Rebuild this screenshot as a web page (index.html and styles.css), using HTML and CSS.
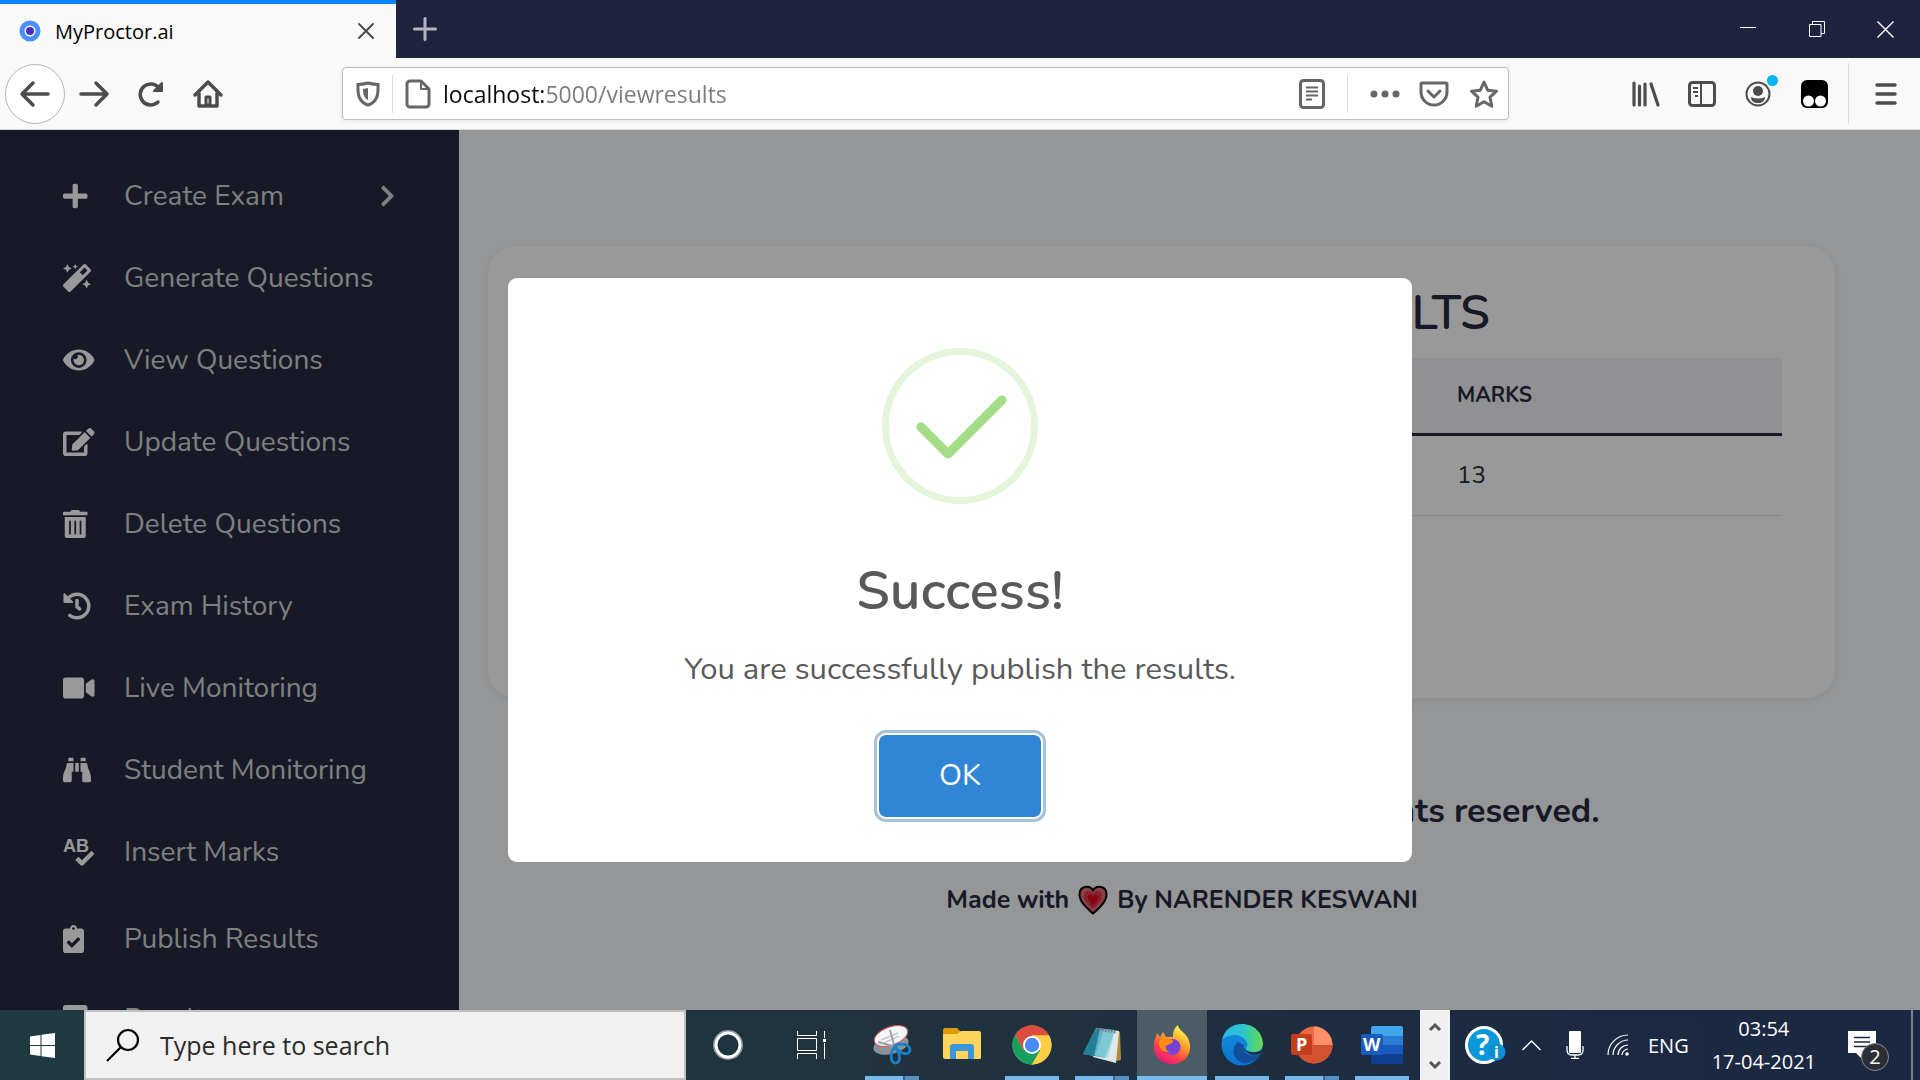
FILE: index.html
```html
<!DOCTYPE html>
<html lang="en">
<head>
<meta charset="utf-8">
<title>MyProctor.ai</title>
<link rel="stylesheet" href="styles.css">
</head>
<body>
<header class="browser">
  <div class="tabs">
    <div class="tab">
      <svg class="favicon" viewBox="0 0 22 22"><circle cx="11" cy="11" r="10.500" fill="#4a90fb"/><circle cx="11" cy="11" r="5.500" fill="#fff"/><circle cx="11" cy="11" r="4" fill="#4b2ac0"/></svg>
      <span class="tab-title">MyProctor.ai</span>
      <button class="plain" aria-label="Close tab"><svg width="18" height="18" viewBox="0 0 18 18" stroke="#4a4a4a" stroke-width="2" stroke-linecap="round"><path d="M2 2l14 14M16 2L2 16"/></svg></button>
    </div>
    <button class="plain new-tab" aria-label="New tab"><svg width="24" height="24" viewBox="0 0 24 24" stroke="#b4b5c0" stroke-width="3" stroke-linecap="round"><path d="M12 1.500v21M1.500 12h21"/></svg></button>
    <div class="window-controls">
      <button class="plain" aria-label="Minimize"><svg width="16" height="18" viewBox="0 0 16 18" stroke="#fff"><path d="M0 7.500h16"/></svg></button>
      <button class="plain" aria-label="Restore"><svg width="16" height="16" viewBox="0 0 16 16" fill="none" stroke="#fff"><path d="M.5 3.500h11.500v12H.5zM3.500 3.500V.5h12v12H12"/></svg></button>
      <button class="plain" aria-label="Close"><svg width="17" height="17" viewBox="0 0 17 17" stroke="#fff" stroke-width="1.400"><path d="M.5.5l16 16M16.500.5l-16 16"/></svg></button>
    </div>
  </div>
  <div class="toolbar">
    <div class="nav-buttons">
      <button class="plain back" aria-label="Back"><svg width="30" height="28" viewBox="0 0 30 28" fill="none" stroke="#4c4c4c" stroke-width="3.500" stroke-linecap="round" stroke-linejoin="round"><path d="M28 14H3M13 3L2 14l11 11"/></svg></button>
      <button class="plain" aria-label="Forward"><svg width="30" height="28" viewBox="0 0 30 28" fill="none" stroke="#4c4c4c" stroke-width="3.500" stroke-linecap="round" stroke-linejoin="round"><path d="M2 14h25M17 3l11 11-11 11"/></svg></button>
      <button class="plain" aria-label="Reload"><svg width="28" height="28" viewBox="0 0 28 28" fill="none" stroke="#4c4c4c" stroke-width="3.500" stroke-linecap="round"><path d="M21 22A10.500 10.500 0 1 1 22 8"/><path d="M25 3v8h-8z" fill="#4c4c4c" stroke-width="2" stroke-linejoin="round"/></svg></button>
      <button class="plain" aria-label="Home"><svg width="30" height="30" viewBox="0 0 30 30" fill="none" stroke="#4c4c4c" stroke-width="3.500" stroke-linecap="round" stroke-linejoin="round"><path d="M2 16L15 3l13 13M6 14v13h18V14"/><path d="M13 26v-8h4v8z" stroke-width="3"/></svg></button>
    </div>
    <div class="url-bar">
      <svg class="shield" width="24" height="26" viewBox="0 0 24 26" fill="none" stroke="#666" stroke-width="3"><path d="M12 2c4 1 7 1.500 10 1.500C22.500 14 21 21 12 24 3 21 1.500 14 2 3.500 5 3.500 8 3 12 2z"/><path d="M12 7v12c-4-2-5-6-5-11z" fill="#666" stroke="none"/></svg>
      <span class="rule"></span>
      <svg width="26" height="30" viewBox="0 0 26 30" fill="none" stroke="#666" stroke-width="3" stroke-linejoin="round"><path d="M5 2h11l8 8v15a3 3 0 0 1-3 3H5a3 3 0 0 1-3-3V5a3 3 0 0 1 3-3z"/><path d="M16 2v8h8" stroke-width="2"/></svg>
      <input class="address" type="text" aria-label="Address" value="localhost:5000/viewresults">
      <button class="plain reader" aria-label="Reader view"><svg width="26" height="30" viewBox="0 0 26 30" fill="none" stroke="#666"><rect x="1.500" y="1.500" width="23" height="27" rx="3" stroke-width="3"/><path d="M7 8.500h12M7 12.500h12M7 16.500h12M7 20.500h6" stroke-width="2"/></svg></button>
      <span class="rule"></span>
      <button class="plain dots" aria-label="Page actions"><svg width="30" height="8" viewBox="0 0 30 8" fill="#666"><circle cx="4" cy="4" r="3.500"/><circle cx="15" cy="4" r="3.500"/><circle cx="26" cy="4" r="3.500"/></svg></button>
      <button class="plain" aria-label="Save to Pocket"><svg width="30" height="26" viewBox="0 0 30 26" fill="none" stroke="#666" stroke-width="3" stroke-linecap="round" stroke-linejoin="round"><path d="M3 2h24q1 0 1 1v8a13 13 0 0 1-26 0V3q0-1 1-1z"/><path d="M9 10l6 6 6-6"/></svg></button>
      <button class="plain" aria-label="Bookmark"><svg width="30" height="30" viewBox="0 0 30 30" fill="none" stroke="#666" stroke-width="3" stroke-linejoin="round"><path d="M15 3l3.700 8.200 8.800 1-6.500 6 1.800 9L15 22.700 7.200 27.200l1.800-9-6.500-6 8.800-1z"/></svg></button>
    </div>
    <div class="tools">
      <button class="plain" aria-label="Library"><svg width="30" height="28" viewBox="0 0 30 28" stroke="#4c4c4c" stroke-width="3.200" stroke-linecap="round"><path d="M3 3v22M8.500 6v19M14 4v21M20 4l7 21"/></svg></button>
      <button class="plain" aria-label="Sidebars"><svg width="28" height="26" viewBox="0 0 28 26" fill="none" stroke="#4c4c4c" stroke-width="3"><rect x="1.500" y="1.500" width="25" height="23" rx="3"/><path d="M13 2v22" stroke-width="2"/><path d="M5 7h5M5 11h5M7 15h3" stroke-width="2"/></svg></button>
      <button class="plain account" aria-label="Account"><svg width="26" height="26" viewBox="0 0 26 26"><circle cx="13" cy="13" r="11.500" fill="none" stroke="#4c4c4c" stroke-width="2"/><circle cx="13" cy="10" r="5" fill="#4c4c4c"/><path d="M6 16q7 3 14 0c0 4-3 6-7 6s-7-2-7-6z" fill="#4c4c4c"/></svg></button>
      <button class="plain" aria-label="Extension"><svg width="27" height="28" viewBox="0 0 27 28"><rect width="27" height="28" rx="6"/><circle cx="7.500" cy="21" r="5.500" fill="#fff"/><circle cx="19.500" cy="21" r="5.500" fill="#fff"/></svg></button>
      <span class="tall-rule"></span>
      <button class="plain" aria-label="Menu"><svg width="22" height="24" viewBox="0 0 22 24" stroke="#4c4c4c" stroke-width="3.500" stroke-linecap="round"><path d="M2 3h18M2 12h18M2 21h18"/></svg></button>
    </div>
  </div>
</header>

<div class="viewport">
  <nav class="sidebar">
    <a href="#" class="item"><span class="icon"><svg viewBox="0 0 448 512"><path d="M416 208H272V64c0-17.670-14.330-32-32-32h-32c-17.670 0-32 14.330-32 32v144H32c-17.670 0-32 14.330-32 32v32c0 17.670 14.330 32 32 32h144v144c0 17.670 14.330 32 32 32h32c17.670 0 32-14.330 32-32V304h144c17.670 0 32-14.330 32-32v-32c0-17.670-14.330-32-32-32z"/></svg></span>Create Exam<svg class="chevron" viewBox="0 0 320 512"><path d="M285.476 272.971L91.132 467.314c-9.373 9.373-24.569 9.373-33.941 0l-22.667-22.667c-9.357-9.357-9.375-24.522-.04-33.901L188.505 256 34.484 101.255c-9.335-9.379-9.317-24.544.04-33.901l22.667-22.667c9.373-9.373 24.569-9.373 33.941 0L285.475 239.030c9.373 9.372 9.373 24.568.001 33.941z"/></svg></a>
    <a href="#" class="item"><span class="icon"><svg viewBox="0 0 512 512"><path d="M224 96l16-32 32-16-32-16-16-32-16 32-32 16 32 16 16 32zM80 160l26.660-53.330L160 80l-53.340-26.670L80 0 53.340 53.330 0 80l53.340 26.670L80 160zm352 128l-26.660 53.330L352 368l53.340 26.670L432 448l26.660-53.330L512 368l-53.340-26.670L432 288zm70.620-193.770L417.770 9.380C411.530 3.120 403.340 0 395.150 0c-8.190 0-16.380 3.120-22.630 9.380L9.380 372.520c-12.500 12.500-12.500 32.760 0 45.250l84.850 84.850c6.250 6.250 14.440 9.370 22.620 9.370 8.190 0 16.380-3.120 22.630-9.370l363.140-363.150c12.500-12.480 12.500-32.750 0-45.240zM359.450 203.460l-50.910-50.910 86.600-86.600 50.910 50.910-86.600 86.600z"/></svg></span>Generate Questions</a>
    <a href="#" class="item"><span class="icon"><svg viewBox="0 0 576 512"><path d="M572.520 241.400C518.290 135.590 410.930 64 288 64S57.680 135.640 3.480 241.410a32.350 32.350 0 0 0 0 29.190C57.710 376.410 165.070 448 288 448s230.320-71.640 284.520-177.410a32.350 32.350 0 0 0 0-29.190zM288 400a144 144 0 1 1 144-144 143.930 143.930 0 0 1-144 144zm0-240a95.310 95.310 0 0 0-25.310 3.790 47.850 47.850 0 0 1-66.900 66.900A95.780 95.780 0 1 0 288 160z"/></svg></span>View Questions</a>
    <a href="#" class="item"><span class="icon"><svg viewBox="0 0 576 512"><path d="M402.600 83.200l90.200 90.200c3.800 3.800 3.800 10 0 13.800L274.400 405.600l-92.800 10.300c-12.400 1.400-22.900-9.100-21.500-21.500l10.300-92.800L388.800 83.200c3.800-3.800 10-3.800 13.800 0zm162-22.900l-48.800-48.800c-15.200-15.200-39.900-15.200-55.200 0l-35.400 35.400c-3.800 3.800-3.800 10 0 13.800l90.200 90.200c3.800 3.800 10 3.800 13.800 0l35.400-35.400c15.200-15.300 15.200-40 0-55.200zM384 346.200V448H64V128h229.800c3.200 0 6.200-1.300 8.500-3.500l40-40c7.600-7.600 2.200-20.500-8.500-20.500H48C21.500 64 0 85.500 0 112v352c0 26.500 21.500 48 48 48h352c26.500 0 48-21.500 48-48V306.200c0-10.700-12.900-16-20.500-8.500l-40 40c-2.200 2.300-3.500 5.300-3.500 8.500z"/></svg></span>Update Questions</a>
    <a href="#" class="item"><span class="icon"><svg viewBox="0 0 448 512"><path d="M32 464a48 48 0 0 0 48 48h288a48 48 0 0 0 48-48V128H32zm272-256a16 16 0 0 1 32 0v224a16 16 0 0 1-32 0zm-96 0a16 16 0 0 1 32 0v224a16 16 0 0 1-32 0zm-96 0a16 16 0 0 1 32 0v224a16 16 0 0 1-32 0zM432 32H312l-9.400-18.700A24 24 0 0 0 281.100 0H166.800a23.720 23.720 0 0 0-21.400 13.300L136 32H16A16 16 0 0 0 0 48v32a16 16 0 0 0 16 16h416a16 16 0 0 0 16-16V48a16 16 0 0 0-16-16z"/></svg></span>Delete Questions</a>
    <a href="#" class="item"><span class="icon"><svg viewBox="0 0 512 512"><path d="M504 255.531c.253 136.640-111.180 248.372-247.820 248.468-59.015.042-113.223-20.530-155.822-54.911-11.077-8.940-11.905-25.541-1.839-35.607l11.267-11.267c8.609-8.609 22.353-9.551 31.891-1.984C173.062 425.135 212.781 440 256 440c101.705 0 184-82.311 184-184 0-101.705-82.311-184-184-184-48.814 0-93.149 18.969-126.068 49.932l50.754 50.754c10.080 10.080 2.941 27.314-11.313 27.314H24c-8.837 0-16-7.163-16-16V38.627c0-14.254 17.234-21.393 27.314-11.314l49.372 49.372C129.209 34.136 189.552 8 256 8c136.810 0 247.747 110.780 248 247.531zm-180.912 78.784l9.823-12.630c8.138-10.463 6.253-25.542-4.210-33.679L288 256.349V152c0-13.255-10.745-24-24-24h-16c-13.255 0-24 10.745-24 24v135.651l65.409 50.874c10.463 8.137 25.541 6.253 33.679-4.210z"/></svg></span>Exam History</a>
    <a href="#" class="item"><span class="icon"><svg viewBox="0 0 576 512"><path d="M336.200 64H47.800C21.400 64 0 85.400 0 111.800v288.400C0 426.600 21.400 448 47.800 448h288.400c26.400 0 47.800-21.400 47.800-47.800V111.800c0-26.400-21.400-47.800-47.800-47.800zm189.400 37.700L416 177.300v157.400l109.600 75.500c21.200 14.600 50.400-.3 50.400-25.800V127.500c0-25.400-29.100-40.400-50.400-25.800z"/></svg></span>Live Monitoring</a>
    <a href="#" class="item"><span class="icon"><svg viewBox="0 0 512 512"><path d="M416 48c0-8.840-7.160-16-16-16h-64c-8.840 0-16 7.160-16 16v48h96V48zM63.910 159.990C61.400 253.840 3.460 274.220 0 404v44c0 17.670 14.330 32 32 32h96c17.670 0 32-14.330 32-32V288h32V128H95.840c-17.630 0-31.450 14.370-31.930 31.990zm384.180 0c-.48-17.620-14.300-31.990-31.930-31.990H320v160h32v160c0 17.670 14.330 32 32 32h96c17.670 0 32-14.330 32-32v-44c-3.460-129.780-61.400-150.160-63.910-244.010zM176 32h-64c-8.840 0-16 7.160-16 16v48h96V48c0-8.840-7.160-16-16-16zm48 256h64V128h-64v160z"/></svg></span>Student Monitoring</a>
    <a href="#" class="item"><span class="icon"><svg viewBox="0 0 576 512"><text class="ab" x="0" y="262">AB</text><path d="M254 372l92 92 202-202" fill="none" stroke="#fff" stroke-width="80" stroke-linejoin="round"/></svg></span>Insert Marks</a>
    <a href="#" class="item publish"><span class="icon"><svg viewBox="0 0 384 512"><path d="M336 64h-80c0-35.300-28.700-64-64-64s-64 28.700-64 64H48C21.500 64 0 85.500 0 112v352c0 26.500 21.500 48 48 48h288c26.500 0 48-21.500 48-48V112c0-26.500-21.500-48-48-48zM192 40c13.300 0 24 10.700 24 24s-10.700 24-24 24-24-10.700-24-24 10.700-24 24-24zm121.200 231.800l-143 141.800c-4.700 4.700-12.300 4.600-17-.1l-82.600-83.300c-4.700-4.700-4.600-12.300.1-17L99.100 285c4.700-4.700 12.300-4.600 17 .1l46 46.400 106-105.200c4.700-4.700 12.300-4.600 17 .1l28.200 28.400c4.700 4.800 4.600 12.300-.1 17z"/></svg></span>Publish Results</a>
    <a href="#" class="item results"><span class="icon"><svg viewBox="0 0 448 512"><rect width="448" height="512" rx="48"/></svg></span>Results</a>
  </nav>
  <main class="content">
    <section class="card">
      <h1>PUBLISH STUDENT RESULTS</h1>
      <table>
        <thead><tr><th>EMAIL</th><th>TEST ID</th><th class="marks">MARKS</th></tr></thead>
        <tbody><tr><td></td><td></td><td>13</td></tr></tbody>
      </table>
    </section>
    <footer>
      <p class="rights">Copyright © 2021 - MyProctor.ai. All rights reserved.</p>
      <p class="credit">Made with <svg class="heart" viewBox="0 0 30 30"><path d="M15 28.500C9 23 1.500 17 1.500 9.500 1.500 1 11.500-.5 15 5.500 18.500-.5 28.500 1 28.500 9.500 28.500 17 21 23 15 28.500z" fill="#eb6a76" stroke="#000" stroke-width="2"/><path d="M15 24C10 19.500 6 15 6 10.500 6 5 12.500 5 15 9c2.500-4 9-4 9 1.500C24 15 20 19.500 15 24z" fill="#e0364a"/><path d="M15 20c-3-3-5.500-5-5.500-8 0-3 4-3 5.500-.5 1.500-2.500 5.500-2.500 5.500.5 0 3-2.500 5-5.500 8z" fill="#e00814"/></svg> By NARENDER KESWANI</p>
    </footer>
  </main>
  <div class="backdrop">
    <div class="modal" role="dialog" aria-labelledby="modal-title">
      <svg class="success" viewBox="0 0 156 156" fill="none"><circle cx="78" cy="78" r="74.500" stroke="#e4f5db" stroke-width="7"/><path d="M39 79l27 27 54-54" stroke="#a5dc86" stroke-width="9" stroke-linecap="round" stroke-linejoin="round"/></svg>
      <h2 id="modal-title">Success!</h2>
      <p>You are successfully publish the results.</p>
      <button class="ok">OK</button>
    </div>
  </div>
</div>

<footer class="taskbar">
  <button class="plain start" aria-label="Start"><svg width="25" height="25" viewBox="0 0 25 25" fill="#fff"><path d="M0 3.500L10.500 2v10H0zM11.500 1.800L25 0v12H11.500zM0 13h10.500v10L0 21.500zM11.500 13H25v12l-13.500-1.800z"/></svg></button>
  <label class="search"><svg width="34" height="34" viewBox="0 0 34 34" fill="none" stroke="#000" stroke-width="2.200"><circle cx="22" cy="12" r="10"/><path d="M15 19L1 33"/></svg><input type="text" placeholder="Type here to search" aria-label="Type here to search"></label>
  <button class="plain wide" aria-label="Cortana"><svg width="30" height="30" viewBox="0 0 30 30" fill="none"><circle cx="15" cy="15" r="13.500" stroke="#8b979c" stroke-width="3"/><circle cx="15" cy="15" r="12" stroke="#fff" stroke-width="3"/></svg></button>
  <button class="plain wide" aria-label="Task view"><svg width="30" height="28" viewBox="0 0 30 28" fill="none" stroke="#fff"><path d="M.5 0v4.500h19V0M.5 7.500h19v12H.5zM.5 28v-5.500h19V28M27.500 0v7M27.500 12v16"/><path d="M26 8h3v3h-3z" fill="#fff" stroke="none"/></svg></button>
  <div class="apps">
    <button class="plain app split" aria-label="Snipping Tool"><svg width="40" height="40" viewBox="0 0 40 40"><ellipse cx="19" cy="20" rx="18" ry="9" fill="#8c9298" transform="rotate(-14 19 20)"/><ellipse cx="19" cy="11" rx="17.500" ry="9" fill="#f6f7f8" stroke="#d9535b" transform="rotate(-20 19 11)"/><path d="M9 15l17-7M12 18l15-7" stroke="#c4c8cc" stroke-width="1.500"/><path d="M18 5l5 18M6 17l18 5" stroke="#9aa0a5" stroke-width="2"/><g fill="none" stroke="#1b80c8" stroke-width="2.800"><path d="M23 21c7-4 15-1 15 4s-9 6-15-4z"/><path d="M23 22c-5 5-5 15 0 16s7-8 0-16z"/></g></svg></button>
    <button class="plain app" aria-label="File Explorer"><svg width="40" height="36" viewBox="0 0 40 36"><path d="M1 3q0-2 2-2h12l4 4h17q2 0 2 2v6H1z" fill="#dd9b0c"/><path d="M1 7h14l4-3h18q2 0 2 2v25q0 1-2 1H3q-2 0-2-2z" fill="#ffd55c"/><path d="M8 32V20q0-3 3-3h18q3 0 3 3v12h-6v-8H14v8z" fill="#3c96dc"/></svg></button>
    <button class="plain app running" aria-label="Chrome"><svg width="40" height="40" viewBox="0 0 40 40"><circle cx="20" cy="20" r="19.500" fill="#fdd03b"/><path d="M3.200 10A19.500 19.500 0 0 1 37 10.500H20L11.500 25z" fill="#dc4c3e"/><path d="M3.200 10A19.500 19.500 0 0 0 20 39.500L28.500 25H11.500z" fill="#17a05d"/><path d="M20 39.500a19.500 19.500 0 0 0 17-29H20L28.500 25z" fill="#ffce44"/><circle cx="20" cy="20" r="9" fill="#fff"/><circle cx="20" cy="20" r="7.200" fill="#4b8af5"/></svg></button>
    <button class="plain app split" aria-label="Notepad"><svg width="40" height="38" viewBox="0 0 40 38"><path d="M34 5l4 1 1 28-5 1z" fill="#b38b3d"/><path d="M14 2l23 3-3 32-23-6z" fill="#dfe7eb"/><path d="M14 2l19 2-10 28L1 28z" fill="#5fb6c8"/><path d="M14 2l8 1-9 27-12-2z" fill="#217f97"/><path d="M18 3l15 2-7 27-14-3z" fill="#90d3df" opacity=".6"/><path d="M14 3l21 3" stroke="#777" stroke-width="3" stroke-dasharray="1.500 1.500"/></svg></button>
    <button class="plain app running active" aria-label="Firefox"><svg width="38" height="40" viewBox="0 0 38 40"><defs><linearGradient id="ff" x1=".8" y1=".1" x2=".3" y2="1"><stop offset="0" stop-color="#fff44f"/><stop offset=".35" stop-color="#ffa32b"/><stop offset=".7" stop-color="#ff4048"/><stop offset="1" stop-color="#e31587"/></linearGradient></defs><path d="M4 8l3 4 3-5 3 5h7c0-5 1-9 5-12 0 6 11 8 12 20 1 11-7 19-18 19S0 31 1 20c0-5 2-7 3-12z" fill="url(#ff)"/><circle cx="19.500" cy="22" r="8" fill="#7840d6"/><path d="M7 14c5-1 12 0 13 2 0 3-5 3-7 5-1 3 1 5 4 6-8 1-13-5-10-13z" fill="#ff8a16"/></svg></button>
    <button class="plain app running" aria-label="Edge"><svg width="42" height="42" viewBox="0 0 42 42"><defs><linearGradient id="eg"><stop offset="0" stop-color="#2bb5e8"/><stop offset=".5" stop-color="#2cc3cf"/><stop offset="1" stop-color="#65da4c"/></linearGradient><linearGradient id="eb" x1="0" y1="0" x2="0" y2="1"><stop offset="0" stop-color="#1690db"/><stop offset="1" stop-color="#0b72cf"/></linearGradient></defs><circle cx="21" cy="21" r="20.500" fill="url(#eb)"/><path d="M17 18c-8 6-5 19 6 21 8 0 14-4 17-9-6 3-20 2-17-9z" fill="#114e99"/><path d="M25 26c7 4 14 2 17-1v4c-6 3-16 3-19-5z" fill="#1e303f"/><path d="M1 16C3 6 11 0 21 0c12 0 21 9 21 20 0 7-8 10-15 7-5-2 1-4-1-8C22 9 8 9 1 16z" fill="url(#eg)"/></svg></button>
    <button class="plain app split" aria-label="PowerPoint"><svg width="42" height="38" viewBox="0 0 42 38"><circle cx="23" cy="19" r="18.500" fill="#ed6c47"/><path d="M23 .5A18.500 18.500 0 0 1 41.500 19H23z" fill="#ff8f6b"/><path d="M4.500 19h37a18.500 18.500 0 0 1-37 0z" fill="#d35230"/><rect y="8" width="21" height="21" rx="2" fill="#c43e1c"/><text class="office" x="5" y="25">P</text></svg></button>
    <button class="plain app running" aria-label="Word"><svg width="42" height="38" viewBox="0 0 42 38"><path d="M10 2q0-2 2-2h28q2 0 2 2v8H10z" fill="#41a5ee"/><path d="M10 10h32v9H10z" fill="#2b7cd3"/><path d="M10 19h32v9H10z" fill="#185abd"/><path d="M10 28h32v8q0 2-2 2H12q-2 0-2-2z" fill="#103f91"/><rect y="8" width="22" height="21" rx="2" fill="#185abd"/><text class="office" x="2" y="25">W</text></svg></button>
  </div>
  <div class="scroller">
    <button class="plain" aria-label="Scroll up"><svg width="12" height="9" viewBox="0 0 12 9" fill="none" stroke="#555" stroke-width="3"><path d="M1 8l5-5 5 5"/></svg></button>
    <button class="plain" aria-label="Scroll down"><svg width="12" height="9" viewBox="0 0 12 9" fill="none" stroke="#555" stroke-width="3"><path d="M1 1l5 5 5-5"/></svg></button>
  </div>
  <div class="tray">
    <button class="plain help" aria-label="Help"><svg width="42" height="38" viewBox="0 0 42 38"><circle cx="19" cy="19" r="17.500" fill="#0997d9" stroke="#fff" stroke-width="3"/><text x="11" y="29" class="q">?</text><circle cx="32" cy="26" r="8.500" fill="#0b8fd2"/><text x="29" y="32" class="i">i</text></svg></button>
    <button class="plain" aria-label="Show hidden icons"><svg width="19" height="12" viewBox="0 0 19 12" fill="none" stroke="#fff" stroke-width="1.400"><path d="M.5 11l9-9 9 9"/></svg></button>
    <button class="plain" aria-label="Microphone"><svg width="18" height="28" viewBox="0 0 18 28" fill="none" stroke="#fff" stroke-width="1.300"><rect x="3" y="0" width="12" height="22" rx="1" fill="#fff" stroke="none"/><path d="M1 15v4q0 5 5 5h6q5 0 5-5v-4M9 24v3M5 27.300h8"/></svg></button>
    <button class="plain" aria-label="Network"><svg width="22" height="22" viewBox="0 0 22 22" fill="none" stroke="#fff" stroke-width="1.200"><path d="M1 21C1 10 10 1 21 1M6 21c0-8 7-15 15-15M11 21c0-6 5-10 10-10M15 21c0-3 3-6 6-6"/><circle cx="20" cy="20" r="1.800" fill="#fff" stroke="none"/></svg></button>
    <span class="lang">ENG</span>
    <div class="clock"><span>03:54</span><span>17-04-2021</span></div>
    <button class="plain notify" aria-label="Notifications"><svg width="28" height="28" viewBox="0 0 28 28"><path d="M0 0h28v22H14v6l-6-6H0z" fill="#fff"/><path d="M6 6.500h16M6 11h16M6 15.500h16" stroke="#1b2a42" stroke-width="1.500"/></svg><span class="count">2</span></button>
  </div>
</footer>
</body>
</html>
```
FILE: styles.css
```css
* { box-sizing: border-box; }
body {
  margin: 0;
  height: 100vh;
  display: flex;
  flex-direction: column;
  overflow: hidden;
  font-family: Nunito, Lato, sans-serif;
}
svg { display: block; flex: none; overflow: visible; }
.plain {
  display: flex;
  align-items: center;
  justify-content: center;
  padding: 0;
  border: 0;
  background: none;
}

/* browser frame */
.browser, .taskbar { font-family: "Segoe UI", "Open Sans", sans-serif; flex: none; }
.tabs { display: flex; height: 58px; background: #202340; }
.tab {
  display: flex;
  align-items: center;
  width: 396px;
  padding: 0 21px 0 19px;
  border-top: 4px solid #0a84ff;
  background: #f9f9fa;
  font-size: 20px;
}
.favicon { width: 22px; height: 22px; }
.tab-title { flex: 1; margin-left: 14px; }
.new-tab { width: 58px; }
.window-controls { display: flex; margin-left: auto; }
.window-controls button { width: 69px; }
.toolbar {
  display: flex;
  align-items: center;
  height: 72px;
  border-bottom: 1px solid #dcdcdd;
  background: #f9f9fa;
}
.nav-buttons { display: flex; align-items: center; width: 342px; padding-left: 5px; }
.nav-buttons button { width: 57px; height: 60px; }
.nav-buttons .back { width: 60px; border: 1px solid #b4b4b4; border-radius: 50%; background: #fff; }
.url-bar {
  flex: 1;
  display: flex;
  align-items: center;
  height: 53px;
  padding: 0 9px 0 13px;
  border: 1px solid #bdbdbd;
  border-radius: 4px;
  background: #fff;
  box-shadow: 0 1px 5px rgba(0, 0, 0, .08);
}
.rule { width: 1px; height: 38px; margin: 0 12px; background: #dedede; }
.address {
  flex: 1;
  min-width: 0;
  height: 40px;
  margin-left: 12px;
  padding: 0;
  border: 0;
  outline: 0;
  font: 23px "Segoe UI", "Open Sans", sans-serif;
  color: transparent;
  background: linear-gradient(90deg, #0c0c0d 101px, #7a7a7b 101px);
  background-clip: text;
}
.reader { margin-right: 10px; }
.dots { margin-left: 10px; }
.dots + button { margin: 0 20px 0 19px; }
.tools { display: flex; align-items: center; width: 411px; padding-left: 109px; }
.tools button { width: 56px; }
.tall-rule { width: 1px; height: 61px; margin: 0 9px 0 6px; background: #dedede; }
.account { position: relative; }
.account::after {
  content: "";
  position: absolute;
  top: -6px;
  right: 8px;
  width: 11px;
  height: 11px;
  border-radius: 50%;
  background: #00b3f4;
}

/* page */
.viewport { position: relative; flex: 1; min-height: 0; display: flex; overflow: hidden; background: #f8fafc; }
.sidebar { width: 459px; flex: none; padding-top: 25px; background: #282b40; }
.item {
  display: flex;
  align-items: center;
  height: 82px;
  padding: 0 64px 0 63px;
  font-size: 28px;
  color: #d0d5d6;
  text-decoration: none;
}
.publish { margin-top: 5px; }
.results { height: 78px; }
.icon { width: 61px; }
.icon svg { height: 28px; fill: #fff; }
.ab { font: bold 330px "Liberation Sans", sans-serif; }
.chevron { height: 24px; margin-left: auto; fill: #d0d5d6; }
.content { flex: 1; padding: 116px 15px 0 29px; color: #282b40; }
.card {
  height: 452px;
  margin-right: 70px;
  padding: 33px 53px;
  border-radius: 28px;
  background: #fff;
  box-shadow: 0 2px 10px rgba(0, 0, 0, .08);
}
h1 { margin: 0; font-size: 48px; line-height: 68px; font-weight: 600; text-align: center; }
table { width: 100%; margin-top: 11px; border-collapse: collapse; table-layout: fixed; text-align: left; }
th { height: 76px; padding: 0 15px; border-bottom: 3px solid #282b40; background: #f2f2f6; font-size: 21px; }
td { height: 81px; padding: 0 15px; border-bottom: 1px solid #e4e4e6; font-size: 24px; }
.marks { width: 340px; }
.content footer { margin: 87px 0 0 -29px; text-align: center; font-weight: 700; }
.rights { margin: 0; font-size: 34px; line-height: 52px; }
.credit { display: flex; align-items: center; justify-content: center; gap: 9px; margin: 46px 0 0; font-size: 25px; line-height: 34px; }
.heart { width: 30px; height: 30px; }

/* success dialog */
.backdrop {
  position: absolute;
  inset: 0;
  display: flex;
  align-items: center;
  justify-content: center;
  background: rgba(0, 0, 0, .4);
}
.modal {
  display: flex;
  flex-direction: column;
  align-items: center;
  width: 904px;
  padding: 70px 36px 45px;
  border-radius: 9px;
  background: #fff;
  color: #595959;
}
.success { width: 156px; height: 156px; }
.modal h2 { margin: 50px 0 0; font-size: 54px; line-height: 74px; font-weight: 600; }
.modal p { margin: 20px 0 0; font-size: 31px; line-height: 42px; }
.ok {
  width: 162px;
  height: 82px;
  margin-top: 45px;
  padding: 0 0 2px;
  border: 0;
  border-radius: 7px;
  background: #3085d6;
  color: #fff;
  font: 30px Nunito, Lato, sans-serif;
  box-shadow: 0 0 0 2px #fff, 0 0 0 5px #abc1d7;
}

/* desktop taskbar */
.taskbar { display: flex; height: 70px; background: linear-gradient(90deg, #203a42, #20323f 50%, #1b2942 85%, #1b2843); color: #fff; }
.start { width: 84px; }
.search {
  display: flex;
  align-items: center;
  width: 602px;
  padding: 0 20px;
  border: 2px solid #c0c0c0;
  background: #f1f1f1;
}
.search input {
  flex: 1;
  margin-left: 20px;
  padding: 0;
  border: 0;
  outline: 0;
  background: none;
  font: 25px "Segoe UI", "Open Sans", sans-serif;
}
.search input::placeholder { color: #2b2b2b; }
.wide { width: 84px; }
.apps { display: flex; width: 566px; padding-left: 3px; }
.app { width: 70px; border-bottom: 4px solid transparent; border-top: 4px solid transparent; }
.running, .split { background: linear-gradient(#76b9ed, #76b9ed) 50% 100% / 54px 4px no-repeat border-box; }
.split { background-image: linear-gradient(90deg, #76b9ed 38px, #3f6484 38px, #3f6484 40px, #5590c2 40px); }
.active { background-color: #4c5c67; background-size: 100% 4px; }
.office { font: bold 18px "Open Sans", sans-serif; fill: #fff; }
.scroller { display: flex; flex-direction: column; justify-content: space-between; width: 30px; padding: 12px 0 10px; background: #f0f0f0; }
.tray { flex: 1; display: flex; align-items: center; padding-left: 14px; margin-right: 7px; border-right: 2px solid #76808f; }
.tray button { width: 43px; }
.tray .help { width: 44px; margin-right: 2px; }
.q { font: bold 28px "Open Sans", sans-serif; fill: #fff; }
.i { font: bold 16px "Open Sans", sans-serif; fill: #fff; }
.lang { margin-left: 9px; font-size: 20px; }
.clock { display: flex; flex-direction: column; align-items: center; margin-left: auto; font-size: 20px; line-height: 33px; }
.tray .notify { position: relative; width: 28px; margin: 0 35px 0 32px; }
.count {
  position: absolute;
  left: 13px;
  top: 12px;
  width: 28px;
  height: 28px;
  border: 1px solid #888;
  border-radius: 50%;
  background: #2c2f36;
  font: 20px/26px "Open Sans", sans-serif;
  color: #fff;
}
```
